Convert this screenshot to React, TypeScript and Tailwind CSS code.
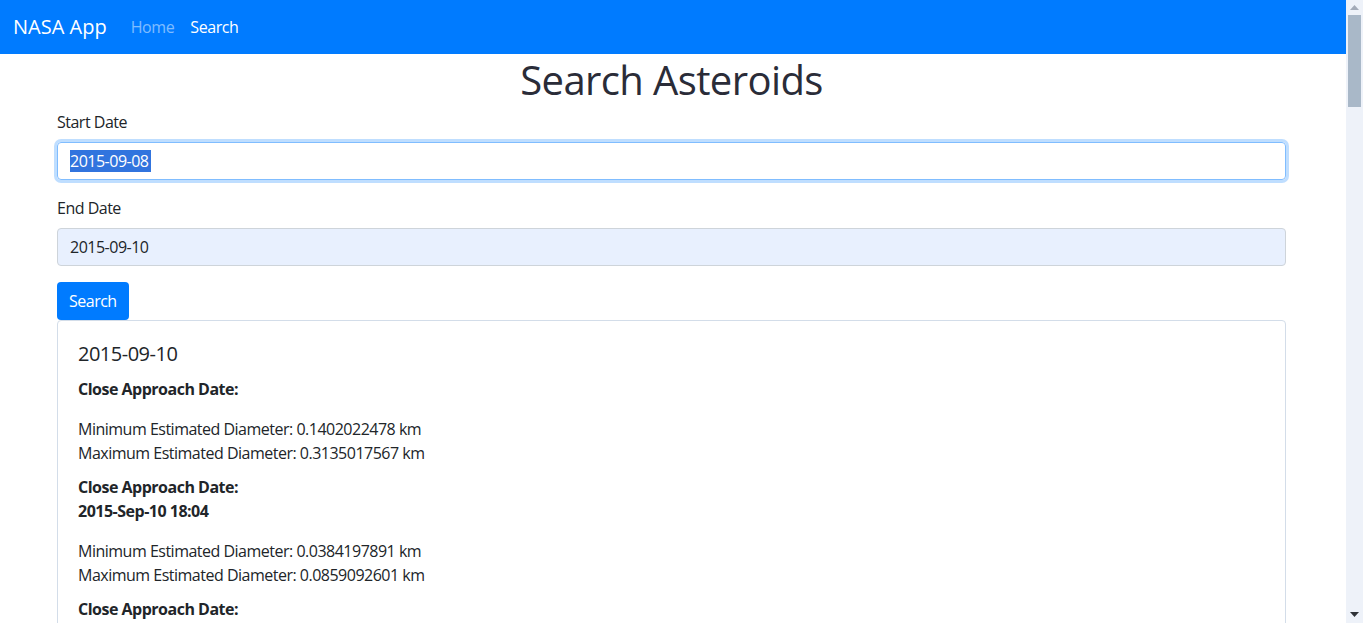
import React from "react";

const font = { fontFamily: '"Open Sans", "Noto Sans", Arial, sans-serif' };

type Approach = { date: string; min?: string; max?: string };

const approaches: Approach[] = [
  { date: "", min: "0.1402022478", max: "0.3135017567" },
  { date: "2015-Sep-10 18:04", min: "0.0384197891", max: "0.0859092601" },
  { date: "" },
];

function Scrollbar() {
  return (
    <div className="w-[17px] shrink-0 bg-[#eef2f9] flex flex-col items-center">
      <div className="h-[15px] flex items-center justify-center">
        <svg width="9" height="5" viewBox="0 0 9 5">
          <path d="M4.5 0 L9 5 L0 5 Z" fill="#a3abb8" />
        </svg>
      </div>
      <div className="w-[13px] h-[92px] bg-[#a9b8c8]" />
      <div className="flex-1" />
      <div className="h-[17px] flex items-center justify-center">
        <svg width="9" height="5" viewBox="0 0 9 5">
          <path d="M0 0 L9 0 L4.5 5 Z" fill="#2f3237" />
        </svg>
      </div>
    </div>
  );
}

export default function App() {
  return (
    <div className="h-screen flex bg-white text-[#212529] text-base leading-6" style={font}>
      <div className="flex-1 overflow-hidden">
        {/* Navbar */}
        <nav className="h-[54px] bg-[#007bff] flex items-center px-[13px]">
          <span className="text-xl text-white mr-4">NASA App</span>
          <a className="px-2 text-white/50 tracking-[-0.4px]">Home</a>
          <a className="px-2 text-white tracking-[-0.4px]">Search</a>
        </nav>

        <div className="ml-[57px] mr-[60px] tracking-[-0.5px]">
          <h1 className="text-[40px] leading-[48px] font-medium text-center text-[#2a2c38] tracking-[-0.6px] mt-[2px] mb-[6px]">
            Search Asteroids
          </h1>

          <div className="mb-4">
            <label className="block mb-2">Start Date</label>
            <div className="h-[38px] border border-[#80bdff] rounded-[4px] shadow-[0_0_0_3px_rgba(0,123,255,0.25)] px-3 flex items-center">
              <span className="bg-[#3174de] text-white leading-[22px] pr-[3px]">2015-09-08</span>
            </div>
          </div>

          <div className="mb-4">
            <label className="block mb-2">End Date</label>
            <div className="h-[38px] border border-[#ced4da] rounded-[4px] bg-[#e8f0fe] px-3 flex items-center">
              2015-09-10
            </div>
          </div>

          <button className="h-[38px] px-3 bg-[#007bff] text-white rounded-[4px] tracking-[-0.5px]">Search</button>

          <div className="border border-[#d3dde9] rounded-[4px] px-5 pt-[21px] pb-20">
            <h5 className="text-xl leading-6 mb-[11px]">2015-09-10</h5>
            {approaches.map((a, i) => (
              <div key={i}>
                <p className="font-bold mb-4">
                  Close Approach Date:
                  {a.date && (
                    <>
                      <br />
                      {a.date}
                    </>
                  )}
                </p>
                {a.min && (
                  <p className="mb-[10px]">
                    Minimum Estimated Diameter: {a.min} km
                    <br />
                    Maximum Estimated Diameter: {a.max} km
                  </p>
                )}
              </div>
            ))}
          </div>
        </div>
      </div>
      <Scrollbar />
    </div>
  );
}
